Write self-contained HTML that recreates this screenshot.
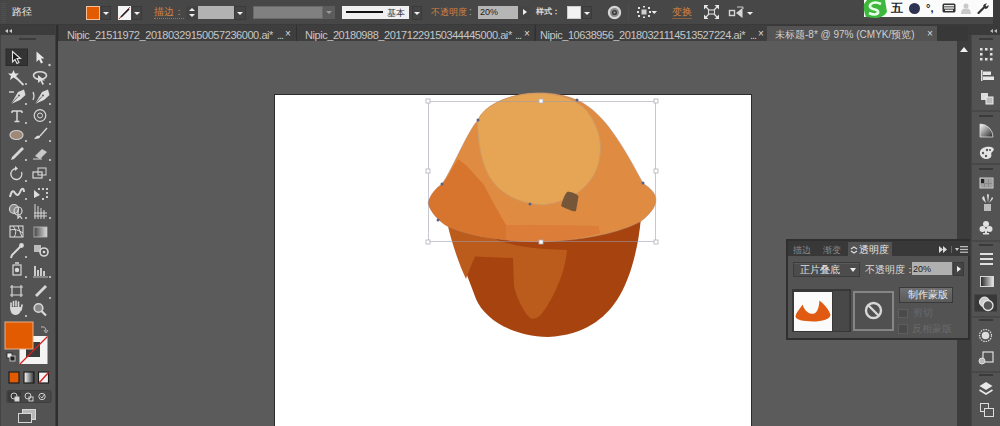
<!DOCTYPE html>
<html><head><meta charset="utf-8">
<style>
*{margin:0;padding:0;box-sizing:border-box}
html,body{width:1000px;height:426px;overflow:hidden;background:#535353;font-family:"Liberation Sans",sans-serif;}
.a{position:absolute}
#ctrl{left:0;top:0;width:1000px;height:25px;background:#474747;border-bottom:1px solid #3a3a3a}
#tabs{left:58px;top:25px;width:910px;height:16px;background:#383838}
.tab{position:absolute;top:0;height:16px;color:#c6c6c6;font-size:11px;line-height:16px;white-space:nowrap;overflow:hidden}
#canvas{left:58px;top:41px;width:899px;height:385px;background:#5b5b5b}
#artboard{left:274px;top:94px;width:478px;height:340px;background:#fff;border-left:1px solid #2c2c2c;border-right:1px solid #2c2c2c;border-top:1px solid #2c2c2c}
#lpanel{left:0;top:25px;width:58px;height:401px;background:#535353}
#scroll{left:957px;top:41px;width:14px;height:385px;background:#3d3d3d}
#rpanel{left:968px;top:25px;width:32px;height:401px;background:#535353}
#tpanel{left:786px;top:239px;width:184px;height:101px;background:#535353;border:2px solid #2f2f2f;border-top-width:2px}
.txt{white-space:nowrap;line-height:12px}
.dd{background:#444;border:1px solid #3a3a3a}
.dd::after{content:"";position:absolute;left:50%;top:50%;margin-left:-3px;margin-top:-1px;border-left:3px solid transparent;border-right:3px solid transparent;border-top:3px solid #f0f0f0}
.tri{position:absolute;width:0;height:0;border-left:3px solid transparent;border-right:3px solid transparent;border-top:3px solid #eee}
.tri.up{border-top:0;border-bottom:3px solid #eee}
.tri.rt{border-top:3px solid transparent;border-bottom:3px solid transparent;border-left:4px solid #eee;border-right:0}
.x{top:1px;font-size:10px;color:#ddd}
</style></head><body>
<div id="ctrl" class="a">
<div class="a" style="left:1px;top:3px;width:5px;height:19px;background:repeating-linear-gradient(#505050 0 1px,transparent 1px 2px)"></div>
<div class="a txt" style="left:12px;top:6px;color:#e8e8e8;font-size:9.6px">路径</div>
<div class="a" style="left:86px;top:6px;width:14px;height:14px;background:#e35b00;border:1.5px solid #f5c096"></div>
<div class="a dd" style="left:101px;top:6px;width:10px;height:14px"></div>
<div class="a" style="left:118px;top:6px;width:13px;height:14px;background:#f4f4f4"><svg width="13" height="14" style="position:absolute;left:0;top:0"><line x1="1" y1="13" x2="12" y2="1" stroke="#c03030" stroke-width="1"/><line x1="3" y1="11" x2="11" y2="3" stroke="#202020" stroke-width="1.6"/></svg></div>
<div class="a dd" style="left:132px;top:6px;width:10px;height:14px"></div>
<div class="a txt" style="left:154px;top:6px;color:#d08440;font-size:9.6px;border-bottom:1px dotted #a87040;line-height:12px">描边：</div>
<div class="a" style="left:186px;top:6px;width:12px;height:14px;background:#424242"><div class="tri up" style="left:3px;top:2px"></div><div class="tri" style="left:3px;top:8px"></div></div>
<div class="a" style="left:198px;top:6px;width:36px;height:13px;background:#b2b2b2"></div>
<div class="a dd" style="left:234px;top:6px;width:12px;height:14px"></div>
<div class="a" style="left:253px;top:6px;width:70px;height:13px;background:#808080;border:1px solid #6a6a6a"></div>
<div class="a" style="left:323px;top:6px;width:12px;height:13px;background:#5c5c5c"><div class="tri" style="left:3px;top:5px;border-top-color:#9a9a9a"></div></div>
<div class="a" style="left:342px;top:6px;width:67px;height:13px;background:#f0f0f0"><div class="a" style="left:4px;top:5px;width:37px;height:2px;background:#111"></div><div class="a txt" style="left:45px;top:1px;color:#333;font-size:9px">基本</div></div>
<div class="a dd" style="left:412px;top:6px;width:10px;height:14px"></div>
<div class="a txt" style="left:431px;top:6px;color:#d08440;font-size:8.6px;line-height:12px">不透明度</div>
<div class="a txt" style="left:469px;top:6px;color:#aaa;font-size:10px;line-height:12px">:</div>
<div class="a" style="left:478px;top:6px;width:40px;height:13px;background:#b6b6b6"><div class="a txt" style="left:2px;top:0px;color:#222;font-size:9px;line-height:12px">20%</div></div>
<div class="a" style="left:519px;top:6px;width:11px;height:13px;background:#444"><div class="tri rt" style="left:4px;top:3px"></div></div>
<div class="a txt" style="left:536px;top:6px;color:#d8d8d8;font-size:8.2px;line-height:12px;font-weight:bold">样式：</div>
<div class="a" style="left:567px;top:6px;width:14px;height:13px;background:#f2f2f2;border:1px solid #ccc"></div>
<div class="a dd" style="left:582px;top:6px;width:10px;height:13px"></div>
<div class="a" style="left:628px;top:4px;width:1px;height:17px;background:#4e4e4e"></div>
<svg class="a" style="left:606px;top:4px" width="17" height="17"><circle cx="8.5" cy="8.5" r="5.6" fill="#8a8a8a" stroke="#d6d6d6" stroke-width="2.2"/><circle cx="8.5" cy="8.5" r="2.6" fill="#3a3a3a"/><circle cx="8.5" cy="8.5" r="1" fill="#aaa"/></svg>
<svg class="a" style="left:637px;top:5px" width="21" height="14"><g fill="#e0e0e0"><rect x="1" y="2" width="2" height="2"/><rect x="11" y="2" width="2" height="2"/><rect x="1" y="10" width="2" height="2"/><rect x="11" y="10" width="2" height="2"/><rect x="6" y="1" width="2" height="1.5"/><rect x="6" y="11.5" width="2" height="1.5"/><rect x="0" y="6" width="2" height="2"/><rect x="12" y="6" width="2" height="2"/></g><rect x="4.5" y="4.5" width="5" height="5" fill="#cfcfcf"/><path d="M14.5 6 L20 6 L17.25 9 Z" fill="#eee"/></svg>
<div class="a txt" style="left:672px;top:6px;color:#d08440;font-size:9.6px;line-height:12px;border-bottom:1px solid #8a6040">变换</div>
<svg class="a" style="left:704px;top:5px" width="15" height="14"><g stroke="#dcdcdc" stroke-width="1.3" fill="none"><path d="M1.5 1.5 L5 5 M13.5 1.5 L10 5 M1.5 12.5 L5 9 M13.5 12.5 L10 9"/><rect x="4.5" y="5" width="6" height="4" stroke-width="1.1"/></g><g fill="#e6e6e6"><path d="M0 0 L4.5 0 L0 4.5Z M15 0 L10.5 0 L15 4.5Z M0 14 L4.5 14 L0 9.5Z M15 14 L10.5 14 L15 9.5Z"/></g></svg>
<svg class="a" style="left:728px;top:4px" width="27" height="16"><rect x="1.5" y="6.5" width="5" height="5" fill="none" stroke="#d6d6d6" stroke-width="1.4"/><path d="M8 9 L14.5 4 L14.5 14 Z" fill="#d8d8d8"/><path d="M9 3 L15 3 L15 5" stroke="#ccc" stroke-width="1" fill="none"/><path d="M19 8 L25 8 L22 11 Z" fill="#eee"/></svg>
<div class="a" style="left:864px;top:0;width:129px;height:17px;background:#fbfbfb"></div>
<div class="a" style="left:993px;top:0;width:7px;height:25px;background:#3a3a3a"></div>
<svg class="a" style="left:863px;top:0" width="25" height="19"><path d="M4 0 L22 0 L24 12 Q20 18 12 18 L3 17 Q0 10 1 4 Z" fill="#3db83d"/><path d="M18 4 Q12 1 8 4 Q5 7 10 9 Q16 10 15 13 Q12 16 6 13" stroke="#e8ffe8" stroke-width="2.6" fill="none"/></svg>
<div class="a txt" style="left:891px;top:2px;color:#1e1e1e;font-size:11.5px;line-height:13px;font-weight:bold;font-family:'Liberation Serif',serif">五</div>
<div class="a" style="left:909px;top:3px;width:11px;height:11px;border-radius:50%;background:#2e3352"></div>
<div class="a txt" style="left:926px;top:2px;color:#222;font-size:11px;line-height:13px;font-weight:bold">°,</div>
<svg class="a" style="left:942px;top:3px" width="14" height="10"><rect x="0.5" y="0.5" width="13" height="9" rx="1.5" fill="#333"/><g fill="#eee"><rect x="2" y="2" width="10" height="1.4"/><rect x="2" y="4.3" width="10" height="1.4"/><rect x="3" y="6.6" width="8" height="1.4"/></g></svg>
<svg class="a" style="left:961px;top:3px" width="10" height="11"><circle cx="5" cy="3" r="2.5" fill="#c9c9c9"/><path d="M0 11 Q0 5 5 5.5 Q10 5 10 11Z" fill="#c9c9c9"/></svg>
<svg class="a" style="left:977px;top:3px" width="12" height="11"><path d="M1.5 10 L7 4.5" stroke="#333" stroke-width="2.2" stroke-linecap="round"/><path d="M6 3 Q7 0 10 0.5 L8.5 2.5 L9.5 3.5 L11.5 2 Q12 5 8.5 6 Z" fill="#333"/></svg>
</div>
<div id="tabs" class="a">
<div class="tab" style="left:1px;width:237px;background:#3e3e3e"><span class="a" style="left:8px;top:2px;letter-spacing:-0.44px">Nipic_21511972_20180329150057236000.ai*</span><span class="a" style="left:218px;top:2px;letter-spacing:-1px">...</span><span class="a x" style="left:226px">×</span></div>
<div class="tab" style="left:238px;width:238px;background:#3e3e3e;border-left:1px solid #303030"><span class="a" style="left:8px;top:2px;letter-spacing:-0.44px">Nipic_20180988_20171229150344445000.ai*</span><span class="a" style="left:218px;top:2px;letter-spacing:-1px">...</span><span class="a x" style="left:227px">×</span></div>
<div class="tab" style="left:477px;width:232px;background:#3e3e3e;border-left:1px solid #303030"><span class="a" style="left:4px;top:2px;letter-spacing:-0.44px">Nipic_10638956_20180321114513527224.ai*</span><span class="a" style="left:214px;top:2px;letter-spacing:-1px">...</span><span class="a x" style="left:222px">×</span></div>
<div class="tab" style="left:709px;top:1px;width:170px;height:15px;background:#535353;color:#cfcfcf"><span class="a" style="left:8px;top:1px;letter-spacing:0px;font-size:10px">未标题-8* @ 97% (CMYK/预览)</span><span class="a x" style="left:160px;top:0px">×</span></div>
</div>
<div id="canvas" class="a"></div>
<div id="artboard" class="a"></div>
<svg id="art" class="a" style="left:0;top:0" width="1000" height="426">
<defs><clipPath id="abclip"><rect x="275" y="90" width="476" height="336"/></clipPath></defs>
<g clip-path="url(#abclip)">
<path d="M447,222 L476,299 C484,318 510,336 548,337 C585,335 605,318 617,300 C630,280 638,250 641,218 Z" fill="#a6430f"/>
<path d="M447,222 L488,236 C505,244 525,248 545,249 L567,250 C565,275 552,300 543,312 C539,318 534,320 530,318 C522,310 516,295 514,286 L513,258 L475,256.5 C472,264 468,273 466,279 C458,262 451,240 447,222 Z" fill="#bb5c1d"/>

<path d="M428,203 C430,195 436,188 442,184 C452,170 468,130 478,120 C495,92 545,86 577,100 C605,112 625,150 643,183 C650,188 656,193 656,200 C656,208 648,216 640,222 C620,232 590,240 541,242 C500,241 468,236 447,226 C440,222 430,212 428,203 Z" fill="#e08b42" stroke="#9a8a90" stroke-width="0.6" stroke-opacity="0.6"/>
<path d="M458,159 L467,166 L484,185 L495,206 L506,225 L598,226 L600,233 C580,238 560,241 541,242 C500,241 468,236 447,226 C440,222 430,212 428,203 C430,195 436,188 442,184 C448,178 452,168 458,159 Z" fill="#d7752e"/><path d="M506,225 L598,226 L600,233 C580,238 560,241 541,242 C528,242 516,241 506,240 Z" fill="#dc7d39"/>
<path d="M478,120 C490,92 560,82 586,110 C598,125 602,140 600,155 C598,178 580,200 544,205 C515,204 495,190 487,172 C480,158 477,135 478,120 Z" fill="#e6a554" stroke="#cf9a66" stroke-width="1"/>
<path d="M568,191.5 C573,192.5 577,194 578.5,196.5 L576,211 C574,212 569,210 561,206 C563,199 565,193 568,191.5 Z" fill="#765639"/>
</g>
<g fill="none" stroke="#9a9aae" stroke-opacity="0.55" stroke-width="1"><rect x="428.5" y="101.5" width="227" height="140"/></g>
<g fill="#fff" stroke="#b0b0bc" stroke-width="0.8">
<rect x="426" y="99" width="4" height="4"/><rect x="539" y="99" width="4" height="4"/><rect x="654" y="99" width="4" height="4"/>
<rect x="426" y="169" width="4" height="4"/><rect x="654" y="169" width="4" height="4"/>
<rect x="426" y="240" width="4" height="4"/><rect x="539" y="240" width="4" height="4"/><rect x="654" y="240" width="4" height="4"/>
</g>
<g fill="#5a5f85"><circle cx="478" cy="120" r="1.5"/><circle cx="577" cy="100" r="1.5"/><circle cx="442" cy="184" r="1.5"/><circle cx="438" cy="220" r="1.5"/><circle cx="643" cy="183" r="1.5"/><circle cx="530" cy="204" r="1.5"/></g>
</svg>
<div id="lpanel" class="a">
<svg class="a" style="left:0;top:0" width="58" height="401" viewBox="0 25 58 401">
<rect x="0" y="25" width="58" height="10" fill="#3c3c3c"/>
<path d="M5 31 L8 29 L8 33Z M9 31 L12 29 L12 33Z" fill="#ccc"/>
<rect x="55" y="25" width="1" height="401" fill="#3f3f3f"/>
<rect x="56" y="25" width="2" height="401" fill="#2e2e2e"/>
<rect x="0" y="35" width="1" height="391" fill="#444"/>
<g fill="#3c3c3c"><rect x="19" y="38" width="17" height="2"/></g>
<rect x="6" y="49" width="21.5" height="16.5" fill="#343434" stroke="#2a2a2a"/>
<g stroke="#e2e2e2" fill="none" stroke-width="1.1">
<path d="M12.5 51.5 L12.5 62 L15 59.5 L17 63.5 L19 62.5 L17 58.5 L20.5 58.5 Z" fill="#1a1a1a"/>
</g>
<path d="M36.5 51.5 L36.5 62 L39 59.5 L41 63.5 L43 62.5 L41 58.5 L44.5 58.5 Z" fill="#e6e6e6"/>
<g fill="#d0d0d0"><circle cx="49.5" cy="65" r="1.2"/><circle cx="26" cy="84" r="1"/><circle cx="50" cy="84" r="1"/><circle cx="26" cy="104" r="1.1"/><circle cx="50" cy="104" r="1"/><circle cx="26" cy="123" r="1.1"/><circle cx="50" cy="122" r="1.1"/><circle cx="26" cy="141" r="1.1"/><circle cx="50" cy="141" r="1.1"/><circle cx="26" cy="160" r="1.1"/><circle cx="50" cy="160" r="1.1"/><circle cx="26" cy="181" r="1.1"/><circle cx="50" cy="180" r="1.1"/><circle cx="26" cy="199" r="1.1"/><circle cx="26" cy="218" r="1.1"/><circle cx="50" cy="218" r="1.1"/><circle cx="26" cy="257" r="1.1"/><circle cx="26" cy="277" r="1.1"/><circle cx="50" cy="277" r="1.1"/><circle cx="50" cy="298" r="1.1"/><circle cx="26" cy="316" r="1.1"/></g>
<g stroke="#d8d8d8" fill="none" stroke-width="1.2">
<!-- magic wand -->
<path d="M13.5 70 L15 73.5 L19 73.5 L16 76 L17.5 80 L13.5 77.5 L10 80 L11 76 L8 73.5 L12 73.5Z" fill="#e4e4e4" stroke="none"/>
<path d="M15.5 77 L23.5 85" stroke-width="1.8"/>
<!-- lasso -->
<ellipse cx="40" cy="75.5" rx="6.5" ry="3.8" stroke-width="1.6"/>
<path d="M38 75 L38 83 L40.5 81 L42.5 85 L44 84 L42 80.5 L45 80.5 Z" fill="#ddd" stroke="none"/>
<!-- pen -->
<path d="M9 92 L14 92" stroke-width="1.4"/>
<path d="M18 92 L24 89.5 L25.5 95 L20 100 L11 104 Z" fill="#dcdcdc" stroke="none"/>
<path d="M11 104 L18 96.5" stroke="#555" stroke-width="0.9"/><circle cx="19" cy="95.5" r="1" fill="#555" stroke="none"/>
<path d="M42 92 L48 89.5 L49.5 95 L44 100 L35 104 Z" fill="#dcdcdc" stroke="none"/>
<path d="M35 104 L42 96.5" stroke="#555" stroke-width="0.9"/><circle cx="43" cy="95.5" r="1" fill="#555" stroke="none"/>
<path d="M33 92 Q35 96 33 100" stroke-width="1.2"/>
<!-- T -->
<path d="M12 111 L22 111 M17 111 L17 121.5 M14.5 121.5 L19.5 121.5 M12 111 L12 113 M22 111 L22 113" stroke-width="1.5"/>
<!-- flare -->
<circle cx="40" cy="115.5" r="5.8"/>
<circle cx="40" cy="115.5" r="2.5" stroke-width="1"/>
<!-- ellipse -->
<ellipse cx="16.5" cy="135" rx="6.5" ry="4.5" fill="#a08878" stroke="#ccc"/>
<!-- brush -->
<path d="M47 128 L40 136" stroke-width="1.4"/>
<path d="M34 139 Q37 134 40 136 Q41 139 34 139Z" fill="#ddd" stroke="none"/>
<!-- pencil -->
<path d="M22 147 L12 157 L11 160 L14 159 L24 149 Z" fill="#d6d6d6" stroke="none"/>
<!-- eraser -->
<path d="M35 156 L42 149 L47 152 L40 159 Z" fill="#c8c8c8" stroke="none"/>
<path d="M33 159 L42 159" stroke-width="1"/>
<!-- rotate -->
<path d="M21.5 172 A5.5 5.5 0 1 1 16 168.5" stroke-width="1.3"/>
<path d="M15 166 L18 168.5 L15 171Z" fill="#ddd" stroke="none"/>
<!-- scale -->
<rect x="33" y="172" width="9" height="6"/>
<rect x="38" y="168" width="8" height="7" stroke-width="1"/>
<!-- warp -->
<path d="M10 197 Q12 188 15 193 Q18 198 21 190 Q24 187 24 192" stroke-width="2"/>
<!-- free transform -->
<path d="M34 190 L34 198 L40 195 Z" fill="#ddd" stroke="none"/>
<g fill="#ccc" stroke="none"><rect x="38" y="188" width="2" height="2"/><rect x="42" y="188" width="2" height="2"/><rect x="46" y="188" width="2" height="2"/><rect x="46" y="192" width="2" height="2"/><rect x="46" y="196" width="2" height="2"/><rect x="42" y="198" width="2" height="2"/></g>
<!-- shape builder -->
<circle cx="14" cy="209" r="4.5" fill="#888"/>
<circle cx="18" cy="211" r="4" />
<path d="M18 210 L18 218 L20 216 L22 219" stroke-width="1.3"/>
<!-- perspective / graph -->
<path d="M35 204 L35 219 M38 206 L38 219 M41 208 L41 219 M44 210 L44 219 M34 213 L47 213 M34 216 L47 216" stroke-width="1"/>
<!-- mesh -->
<rect x="10" y="226" width="13" height="11" stroke-width="1.1"/>
<path d="M10 230 Q16 228 23 233 M13 226 Q18 232 14 237 M18 226 Q20 232 22 237" stroke-width="1"/>
<!-- gradient -->
</g>
<defs><linearGradient id="lg1" x1="0" x2="1"><stop offset="0" stop-color="#444"/><stop offset="1" stop-color="#ddd"/></linearGradient></defs>
<rect x="34" y="227" width="13" height="10" fill="url(#lg1)" stroke="#bbb" stroke-width="0.8"/>
<g stroke="#d8d8d8" fill="none" stroke-width="1.2">
<!-- eyedropper -->
<path d="M22 245 L12 255 L11 258" stroke-width="2"/>
<circle cx="21.5" cy="245.5" r="1.8" fill="#ddd"/>
<!-- blend -->
<rect x="34" y="245" width="7" height="7" fill="#bbb" stroke="none"/>
<circle cx="44" cy="252" r="4" stroke-width="1.6"/>
<circle cx="44" cy="252" r="1.3" fill="#ddd" stroke="none"/>
<!-- symbol sprayer -->
<rect x="13" y="265" width="8" height="10" stroke-width="1.2"/>
<circle cx="17" cy="270" r="1.6" fill="#ddd"/>
<path d="M15 263 L19 263" stroke-width="1.5"/>
<!-- graph -->
<path d="M35 276 L35 266 M38 276 L38 270 M41 276 L41 268 M44 276 L44 271" stroke-width="1.8"/>
<path d="M33 277 L48 277" stroke-width="0.8"/>
<!-- artboard -->
<path d="M12 285 L12 297 M21 285 L21 297 M10 287 L23 287 M10 295 L23 295" stroke-width="1.2"/>
<!-- slice -->
<path d="M35 295 L45 285 L47 287 L37 297 Z" fill="#d6d6d6" stroke="none"/>
<!-- hand -->
<path d="M11 307 L11 303 M13.5 306 L13.5 301.5 M16 306 L16 301 M18.5 307 L18.5 302 M21 310 L22 305" stroke-width="1.6" stroke-linecap="round"/>
<path d="M10 307 Q10 314 15 315 Q20 315 21 310 L21 307 L10 307Z" fill="#d8d8d8" stroke="none"/>
<!-- zoom -->
<circle cx="38.5" cy="308" r="4.3" stroke-width="1.6" fill="#888"/>
<path d="M41.5 311 L46 315.5" stroke-width="2.2"/>
</g>
<!-- fill/stroke -->
<rect x="19.5" y="336" width="28" height="28" fill="#f4f4f4"/>
<rect x="26" y="342" width="14" height="15" fill="#3a3a3a"/>
<rect x="5" y="322" width="28" height="27" fill="#e35b00" stroke="#e7b08a" stroke-width="1"/>
<path d="M20 364 L47.5 336.5" stroke="#d82020" stroke-width="1.2"/>
<path d="M41 327 Q46 326 46 331 M44 330 L46 333 L48 330" stroke="#bbb" fill="none" stroke-width="1"/>
<rect x="7" y="353" width="5" height="5" fill="#eee" stroke="#222" stroke-width="0.8"/>
<rect x="10" y="356" width="5" height="5" fill="#222" stroke="#ddd" stroke-width="0.8"/>
<!-- color modes -->
<rect x="9" y="372" width="10" height="11" fill="#e35b00" stroke="#1e1e1e" stroke-width="1.2"/>
<defs><linearGradient id="lg2" x1="0" x2="1"><stop offset="0" stop-color="#fff"/><stop offset="1" stop-color="#333"/></linearGradient></defs>
<rect x="24" y="372" width="10" height="11" fill="url(#lg2)" stroke="#1e1e1e" stroke-width="1.2"/>
<rect x="38.5" y="372" width="10" height="11" fill="#f4f4f4" stroke="#1e1e1e" stroke-width="1.2"/>
<path d="M39 383 L48.5 372.5" stroke="#d82020" stroke-width="1.4"/>
<!-- draw modes -->
<rect x="7" y="390.5" width="44" height="12" rx="1.5" fill="#474747" stroke="#3e3e3e"/><rect x="8" y="391.5" width="13" height="10" fill="#3a3a3a"/>
<g stroke="#d0d0d0" fill="none" stroke-width="1">
<circle cx="14" cy="396" r="3"/><rect x="15" y="397" width="4" height="4" fill="#ddd"/>
<circle cx="28" cy="396" r="3"/><rect x="29" y="397" width="4" height="4"/>
<circle cx="42" cy="396.5" r="3.2"/><path d="M40.5 396.5 L42 398 L44 395"/>
</g>
<!-- screen mode -->
<rect x="22.5" y="409.5" width="13" height="10" fill="#b8b8b8" stroke="#d6d6d6" stroke-width="1"/>
<rect x="18.5" y="413.5" width="13" height="9" fill="#505050" stroke="#d6d6d6" stroke-width="1"/>
</svg>
</div>
<div id="scroll" class="a"><svg class="a" style="left:1px;top:4px" width="12" height="8"><path d="M2 7 L6 2 L10 7 Z" fill="#f0f0f0"/></svg></div>
<div id="rpanel" class="a">
<svg class="a" style="left:0;top:0" width="32" height="401" viewBox="968 25 32 401">
<rect x="968" y="25" width="32" height="10" fill="#3a3a3a"/>
<path d="M990 31 L993 29 L993 33Z M994 31 L997 29 L997 33Z" fill="#bbb"/>
<rect x="968" y="35" width="3" height="391" fill="#3d3d3d"/>
<rect x="971" y="35" width="1" height="391" fill="#474747"/>
<g fill="#3a3a3a">
<rect x="979" y="38" width="14" height="2"/>
<rect x="979" y="115" width="14" height="2"/>
<rect x="979" y="168" width="14" height="2"/>
<rect x="979" y="244" width="14" height="2"/>
<rect x="979" y="319" width="14" height="2"/>
<rect x="979" y="374" width="14" height="2"/>
</g>
<g fill="#484848">
<rect x="971" y="110" width="29" height="2"/><rect x="971" y="163" width="29" height="2"/><rect x="971" y="240" width="29" height="2"/><rect x="971" y="316" width="29" height="2"/><rect x="971" y="371" width="29" height="2"/>
</g>
<!-- transform -->
<g fill="#e0e0e0"><rect x="980" y="48" width="2.5" height="2.5"/><rect x="985" y="48" width="2.5" height="2.5"/><rect x="990" y="48" width="2.5" height="2.5"/><rect x="980" y="53" width="2.5" height="2.5"/><rect x="990" y="53" width="2.5" height="2.5"/><rect x="980" y="58" width="2.5" height="2.5"/><rect x="985" y="58" width="2.5" height="2.5"/><rect x="990" y="58" width="2.5" height="2.5"/></g>
<rect x="983" y="51" width="6" height="6" fill="#444"/>
<!-- align -->
<rect x="981" y="70" width="1.5" height="11" fill="#ddd"/>
<rect x="983" y="71.5" width="8" height="3.5" fill="#e6e6e6"/>
<rect x="983" y="76.5" width="11" height="3.5" fill="#e6e6e6"/>
<!-- pathfinder -->
<rect x="981" y="93" width="7" height="7" fill="#ddd"/>
<rect x="986" y="97" width="7" height="7" fill="#bbb" stroke="#eee" stroke-width="1"/>
<!-- gradient quarter -->
<defs><linearGradient id="rg1" x1="0" y1="0" x2="1" y2="1"><stop offset="0" stop-color="#fff"/><stop offset="1" stop-color="#222"/></linearGradient>
<linearGradient id="rg2" x1="0" x2="1"><stop offset="0" stop-color="#222"/><stop offset="1" stop-color="#eee"/></linearGradient></defs>
<path d="M980 124 L980 137 L993 137 A13 13 0 0 0 980 124Z" fill="url(#rg1)" stroke="#ddd" stroke-width="0.8"/>
<!-- palette -->
<path d="M980 154 C979 148 986 146 991 147 C995 148 994 151 992 152 C990 154 993 156 990 158 C987 160 981 159 980 154Z" fill="#e4e4e4"/>
<g fill="#555"><circle cx="983" cy="153" r="1.2"/><circle cx="986" cy="156" r="1.2"/><circle cx="987" cy="150" r="1.2"/><circle cx="990" cy="150" r="1"/></g>
<!-- swatches -->
<rect x="980" y="178" width="13" height="10" fill="#888" stroke="#cfcfcf" stroke-width="1"/>
<g fill="#222"><rect x="981" y="179" width="3" height="4"/></g>
<g fill="#a0a0a0"><rect x="985" y="179" width="3" height="4"/><rect x="989" y="179" width="3" height="4"/><rect x="981" y="184" width="3" height="3"/><rect x="985" y="184" width="3" height="3"/><rect x="989" y="184" width="3" height="3"/></g>
<!-- brushes -->
<path d="M983 200 Q981 197 984 196 L986 203 Z M987 195 Q987 193 989 195 L988 203Z M992 197 Q994 198 992 200 L989 203Z" fill="#ddd"/>
<rect x="984" y="204" width="7" height="7" fill="#bbb"/>
<!-- symbols club -->
<g fill="#e0e0e0"><circle cx="986" cy="224" r="3"/><circle cx="982.5" cy="229" r="3"/><circle cx="989.5" cy="229" r="3"/><rect x="985" y="229" width="2" height="5"/><rect x="983" y="233" width="6" height="1.5"/></g>
<!-- stroke lines -->
<g fill="#e0e0e0"><rect x="980" y="253" width="13" height="2"/><rect x="980" y="258" width="13" height="2"/><rect x="980" y="263" width="13" height="2"/></g>
<!-- gradient rect -->
<rect x="980.5" y="276.5" width="13" height="10" fill="url(#rg2)" stroke="#d6d6d6" stroke-width="1"/>
<!-- transparency active -->
<rect x="974.5" y="294.5" width="22.5" height="17" fill="#383838"/>
<circle cx="984.5" cy="302" r="5" fill="#ccc" stroke="#eee" stroke-width="1"/>
<circle cx="988" cy="305.5" r="5" fill="#555" stroke="#e6e6e6" stroke-width="1.3"/>
<!-- appearance -->
<circle cx="985.5" cy="335.5" r="6" fill="none" stroke="#ddd" stroke-width="1.2" stroke-dasharray="1.5 1"/>
<circle cx="985.5" cy="335.5" r="3.8" fill="#ddd"/>
<!-- graphic styles -->
<rect x="983" y="352" width="10" height="10" fill="none" stroke="#ddd" stroke-width="1.2"/>
<circle cx="982" cy="361" r="3" fill="#bbb" stroke="#ddd" stroke-width="1"/>
<!-- layers -->
<path d="M979.5 386 L986 382 L992.5 386 L986 390Z" fill="#e8e8e8"/>
<path d="M979.5 390 L986 394 L992.5 390" fill="none" stroke="#e8e8e8" stroke-width="1.6"/>
<!-- artboards -->
<rect x="980.5" y="403.5" width="8" height="8" fill="#555" stroke="#ddd" stroke-width="1"/>
<rect x="984.5" y="408.5" width="9" height="8" fill="#555" stroke="#ddd" stroke-width="1"/>
</svg>
</div>
<div id="tpanel" class="a">
<div class="a" style="left:0;top:0;width:182px;height:15px;background:#383838"></div>
<div class="a txt" style="left:5px;top:3px;color:#8a8a8a;font-size:9px">描边</div>
<div class="a txt" style="left:35px;top:3px;color:#8a8a8a;font-size:9px">渐变</div>
<div class="a" style="left:60px;top:1px;width:44px;height:14px;background:#535353"></div>
<svg class="a" style="left:62px;top:5px" width="8" height="8"><path d="M1 3 L4 1 L7 3 M1 5 L4 7 L7 5" stroke="#ddd" stroke-width="1.2" fill="none"/></svg>
<div class="a txt" style="left:71px;top:3px;color:#e8e8e8;font-size:9.5px">透明度</div>
<svg class="a" style="left:150px;top:4px" width="32" height="9"><path d="M1 1 L5 4.5 L1 8Z M5 1 L9 4.5 L5 8Z" fill="#ddd"/><rect x="13" y="1" width="1" height="7" fill="#666"/><path d="M17 3 L21 3 L19 6Z" fill="#ccc"/><g fill="#bbb"><rect x="22" y="1" width="8" height="1.3"/><rect x="22" y="3.8" width="8" height="1.3"/><rect x="22" y="6.6" width="8" height="1.3"/></g></svg>
<div class="a" style="left:5px;top:21px;width:67px;height:15px;background:#4c4c4c;border:1px solid #3c3c3c;box-shadow:inset 0 1px 0 #5a5a5a"></div>
<div class="a txt" style="left:12px;top:23px;color:#e0e0e0;font-size:9.5px">正片叠底</div>
<div class="a tri" style="left:62px;top:27px;border-left-width:3.5px;border-right-width:3.5px;border-top-width:4px"></div>
<div class="a txt" style="left:77px;top:23px;color:#dcdcdc;font-size:9.5px">不透明度：</div>
<div class="a" style="left:124px;top:21px;width:40px;height:13px;background:#b0b0b0"></div>
<div class="a txt" style="left:125px;top:22px;color:#222;font-size:9px">20%</div>
<div class="a" style="left:165px;top:21px;width:11px;height:14px;background:#444;border:1px solid #3a3a3a"></div>
<div class="a tri rt" style="left:169px;top:25px"></div>
<div class="a" style="left:4px;top:48px;width:59px;height:43px;background:#383838"></div>
<div class="a" style="left:6px;top:51px;width:38px;height:39px;background:#fbfbfb"></div>
<div class="a" style="left:45px;top:50px;width:17px;height:40px;background:#484848;border-right:1px solid #3a3a3a"></div>
<svg class="a" style="left:0;top:0" width="50" height="95"><path d="M14.5,63.6 C16,68 19,72.5 23.7,72.8 C28,73 31,69 31.4,59.4 C35,62 41,68 42.4,73.5 C43,78 34,80.5 25,80.5 C15,80.5 8,79 7.5,75.6 C8,72 11,69 14.5,63.6 Z" fill="#e05a12"/></svg>
<div class="a" style="left:65px;top:50px;width:41px;height:40px;border:2px solid #858585;background:#505050"></div>
<svg class="a" style="left:76px;top:60px" width="19" height="19"><circle cx="9.5" cy="9.5" r="7.5" fill="none" stroke="#d6d6d6" stroke-width="2.4"/><path d="M4.5 4.5 L14.5 14.5" stroke="#d6d6d6" stroke-width="2.4"/></svg>
<div class="a" style="left:111px;top:46px;width:54px;height:16px;background:linear-gradient(#707070,#5a5a5a);border:1px solid #3a3a3a"></div>
<div class="a txt" style="left:120px;top:48px;color:#ececec;font-size:9.5px">制作蒙版</div>
<div class="a" style="left:110px;top:68px;width:10px;height:9px;border:1px solid #5e5e5e;background:#4a4a4a"></div>
<div class="a txt" style="left:125px;top:66px;color:#6a6a6a;font-size:9.5px">剪切</div>
<div class="a" style="left:110px;top:83px;width:10px;height:10px;border:1px solid #5e5e5e;background:#4a4a4a"></div>
<div class="a txt" style="left:124px;top:82px;color:#6a6a6a;font-size:9.5px">反相蒙版</div>
</div>
</body></html>
